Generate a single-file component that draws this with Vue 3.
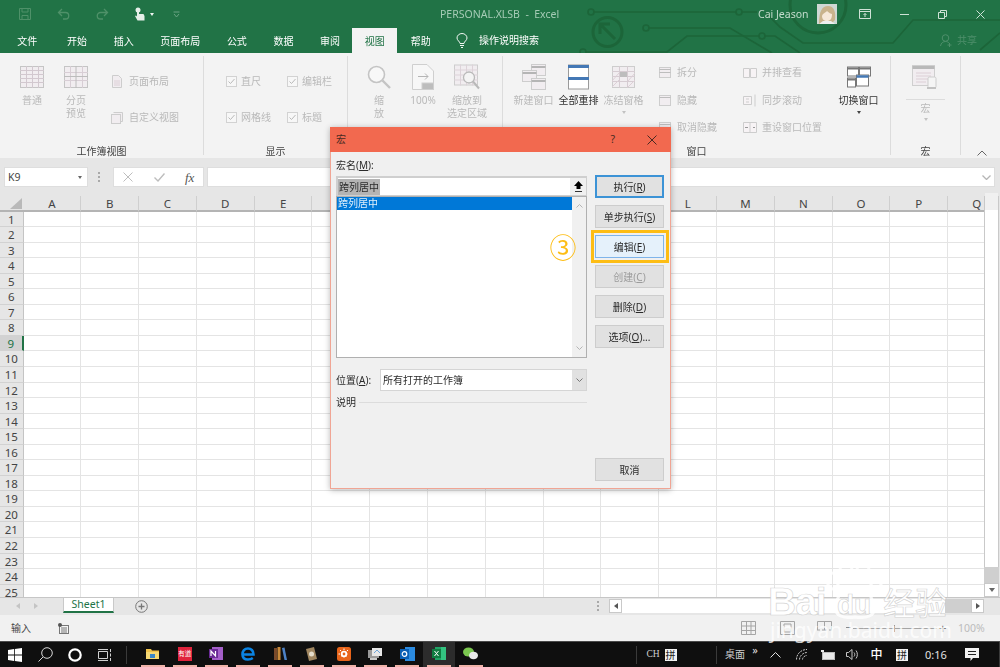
<template>
  <div class="app">
    <header class="head">
      <svg class="circuit" viewBox="0 0 1000 53" width="1000" height="53" fill="none" stroke="#1c6539" stroke-width="1.7">
        <circle cx="591" cy="12" r="3"/><path d="M594 12H736M742 12H757"/><circle cx="739" cy="12" r="3"/>
        <circle cx="607.5" cy="32" r="14.5" stroke-width="3"/><path d="M615 39L601 25M600 34V24H610" stroke-width="3"/>
        <circle cx="646" cy="28" r="3"/><path d="M649 28H730L772 53"/>
        <circle cx="583" cy="52" r="3"/><path d="M586 52H667L687 36H759M765 36H775L800 53"/><circle cx="762" cy="36" r="3"/>
        <path d="M766 13L780 27L803 43H893L913 20H1000M980 50L1000 33"/>
        <circle cx="818" cy="5" r="28" stroke-width="3"/>
      </svg>
      <div class="titlebar">
        <svg class="qa save" width="12" height="12" viewBox="0 0 12 12" fill="none" stroke="#4f9169"><path d="M.5.5H11.5V11.5H.5Z"/><path d="M3 .5V4H9V.5M3 11.5V7.5H9V11.5"/></svg>
        <svg class="qa undo" width="13" height="12" viewBox="0 0 13 12" fill="none" stroke="#4f9169" stroke-width="1.3"><path d="M5 1L1.5 4.5L5 8M2 4.5H8.5A3.2 3.2 0 0 1 8.5 11H6"/></svg>
        <svg class="qa redo" width="13" height="12" viewBox="0 0 13 12" fill="none" stroke="#4f9169" stroke-width="1.3"><path d="M8 1L11.5 4.5L8 8M11 4.5H4.5A3.2 3.2 0 0 0 4.500 11H7"/></svg>
        <svg class="qa touch" width="11" height="14" viewBox="0 0 11 14" fill="#e6efe9"><circle cx="4" cy="3" r="2.5"/><path d="M3 3H5V7H9.500L10.500 9V13.500H3.500L1 9L2 8.500L3 9.500Z"/></svg>
        <span class="caret-w"></span>
        <svg class="qa more" width="7" height="7" viewBox="0 0 7 7" fill="none" stroke="#6aa383"><path d="M.5 1H6.500M1 3L3.500 6L6 3"/></svg>
        <span class="doc-title">PERSONAL.XLSB&nbsp; - &nbsp;Excel</span>
        <span class="user">Cai Jeason</span>
        <svg class="avatar" width="20" height="20" viewBox="0 0 20 20"><rect width="20" height="20" fill="#cfd8d4"/><path d="M2 20C2 7 5 2 11 2C17 2 19 8 18 16L14 20Z" fill="#c9b38c"/><path d="M5 12C6 9 8 9 10 7C12 9 14 10 15 10C15 15 13 17 10 17C7 17 5 15 5 12Z" fill="#f6e8d9"/><path d="M2 20L6 17L14 17L18 20Z" fill="#eef0f0"/></svg>
        <svg class="wc wc1" width="12" height="10" viewBox="0 0 12 10" fill="none" stroke="#cfe2d6"><path d="M.5.500H11.500V9.500H.5ZM.5 2.500H11.500M6 8V4.500M4.500 6L6 4.500L7.500 6"/></svg>
        <svg class="wc wc2" width="9" height="9" viewBox="0 0 9 9" stroke="#cfe2d6"><path d="M0 4.500H9"/></svg>
        <svg class="wc wc3" width="9" height="9" viewBox="0 0 9 9" fill="none" stroke="#cfe2d6"><path d="M.5 2.500H6.500V8.500H.5ZM2.500 2.500V.5H8.500V6.500H6.500"/></svg>
        <svg class="wc wc4" width="9" height="9" viewBox="0 0 9 9" stroke="#cfe2d6"><path d="M.5.500L8.500 8.500M8.500.500L.5 8.500"/></svg>
      </div>
      <nav class="tabs">
        <span v-for="t in tabs" :key="t" class="tab" :class="{ active: t === '视图', first: t === '文件' }">{{ t }}</span>
        <svg class="bulb" width="12" height="15" viewBox="0 0 12 15" fill="none" stroke="#f2f7f4"><path d="M4 10.500C4 8.500 1 7.500 1 5A5 4.500 0 0 1 11 5C11 7.500 8 8.500 8 10.500ZM4 12.500H8M5 14.500H7"/></svg>
        <span class="search">操作说明搜索</span>
        <svg class="person" width="12" height="13" viewBox="0 0 12 13" fill="none" stroke="#4f8f6b"><circle cx="5.500" cy="4" r="3.300"/><path d="M.5 12C1 9 3 7.500 5.500 7.500C7 7.500 8 8 9 9M9.500 9V13M7.500 11H11.500"/></svg>
        <span class="share">共享</span>
      </nav>
    </header>

    <section class="ribbon">
      <div class="group g1">
        <div class="group-body">
          <div class="big">
            <svg class="big-ic" width="24" height="22" viewBox="0 0 24 22"><rect x=".5" y=".5" width="23" height="21" fill="#f1edf0" stroke="#c5c5c5"/><path d="M0 4.500H24M0 8.500H24M0 12.500H24M0 16.500H24M6.500 0V22M12.500 0V22M18.500 0V22" stroke="#d2c8cf"/></svg>
            <span class="lbl">普通</span>
          </div>
          <div class="big">
            <svg class="big-ic" width="24" height="22" viewBox="0 0 24 22"><rect x=".5" y=".5" width="23" height="21" fill="#f1edf0" stroke="#c5c5c5"/><path d="M0 6.500H24M0 14.500H24M6.500 0V22M18.500 0V22" stroke="#d8ced5"/><path d="M12 0V22M0 10.500H24" stroke="#bcbcbc"/></svg>
            <span class="lbl">分页<br>预览</span>
          </div>
          <div class="small-col c1">
            <div class="small">
              <svg class="sic" width="10" height="13" viewBox="0 0 10 13" fill="#f1edf0" stroke="#cdcdcd"><path d="M.5.500H6.500L9.500 3.500V12.500H.5Z"/><path d="M2 6H8M2 8H8M2 10H8" stroke="#dccfd6"/></svg>
              <span class="lbl">页面布局</span>
            </div>
            <div class="small">
              <svg class="sic" width="12" height="12" viewBox="0 0 12 12" fill="#f1edf0" stroke="#cdcdcd"><path d="M2.500.500H11.500V9.500H9.500"/><rect x=".5" y="2.500" width="9" height="9"/></svg>
              <span class="lbl">自定义视图</span>
            </div>
          </div>
        </div>
        <div class="group-label">工作簿视图</div>
      </div>

      <div class="group g2">
        <div class="group-body">
          <div class="small-col c2a">
            <div class="small chk"><svg width="11" height="11" viewBox="0 0 11 11" fill="#f7f7f7" stroke="#d2d2d2"><rect x=".5" y=".5" width="10" height="10"/><path d="M2.500 5.500L4.500 7.500L8.500 3" fill="none" stroke="#b9b9b9"/></svg><span class="lbl">直尺</span></div>
            <div class="small chk"><svg width="11" height="11" viewBox="0 0 11 11" fill="#f7f7f7" stroke="#d2d2d2"><rect x=".5" y=".5" width="10" height="10"/><path d="M2.500 5.500L4.500 7.500L8.500 3" fill="none" stroke="#b9b9b9"/></svg><span class="lbl">网格线</span></div>
          </div>
          <div class="small-col">
            <div class="small chk"><svg width="11" height="11" viewBox="0 0 11 11" fill="#f7f7f7" stroke="#d2d2d2"><rect x=".5" y=".5" width="10" height="10"/><path d="M2.500 5.500L4.500 7.500L8.500 3" fill="none" stroke="#b9b9b9"/></svg><span class="lbl">编辑栏</span></div>
            <div class="small chk"><svg width="11" height="11" viewBox="0 0 11 11" fill="#f7f7f7" stroke="#d2d2d2"><rect x=".5" y=".5" width="10" height="10"/><path d="M2.500 5.500L4.500 7.500L8.500 3" fill="none" stroke="#b9b9b9"/></svg><span class="lbl">标题</span></div>
          </div>
        </div>
        <div class="group-label">显示</div>
      </div>

      <div class="group g3">
        <div class="group-body">
          <div class="big">
            <svg class="big-ic" width="24" height="24" viewBox="0 0 24 24" fill="none" stroke="#c4c4c4"><circle cx="9.500" cy="9.500" r="8" stroke-width="1.600" fill="#f8f8f8"/><path d="M15.500 15.500L23 23" stroke-width="2.400"/></svg>
            <span class="lbl">缩<br>放</span>
          </div>
          <div class="big">
            <svg class="big-ic" width="22" height="26" viewBox="0 0 22 26" fill="#f7f7f7" stroke="#cfcfcf"><path d="M.5.500H15L21.500 7V25.500H.5Z"/><path d="M6 12.500H16M13 9.500L16 12.500L13 15.500" fill="none" stroke="#b5b5b5"/><rect x="10" y="19" width="11.500" height="6.500" fill="#bdbdbd"/></svg>
            <span class="lbl">100%</span>
          </div>
          <div class="big">
            <svg class="big-ic" width="26" height="25" viewBox="0 0 26 25"><rect x=".5" y=".5" width="23" height="20" fill="#f1edf0" stroke="#cdcdcd"/><path d="M0 5.500H24M0 10.500H24M0 15.500H24M6.500 0V21M12.500 0V21M18.500 0V21" stroke="#ddd3d9"/><circle cx="15" cy="13" r="5.500" fill="#f4f4f4" stroke="#b9b9b9" stroke-width="1.300"/><path d="M19 17L25 24" stroke="#b9b9b9" stroke-width="2"/></svg>
            <span class="lbl">缩放到<br>选定区域</span>
          </div>
        </div>
        <div class="group-label">缩放</div>
      </div>

      <div class="group g4">
        <div class="group-body">
          <div class="big wide">
            <svg class="big-ic" width="24" height="26" viewBox="0 0 24 26" fill="#f1edf0" stroke="#cdcdcd"><rect x="9.500" y=".5" width="14" height="11"/><path d="M9.500 3H23.500" stroke="#b5b5b5" stroke-width="2"/><rect x=".5" y="6.500" width="14" height="11"/><path d="M.5 9H14.500" stroke="#b5b5b5" stroke-width="2"/><rect x="9.500" y="14.500" width="14" height="11"/><path d="M9.500 17H23.500" stroke="#b5b5b5" stroke-width="2"/></svg>
            <span class="lbl">新建窗口</span>
          </div>
          <div class="big wide on">
            <svg class="big-ic" width="21" height="25" viewBox="0 0 21 25" fill="#fff" stroke="#9a9a9a"><rect x=".5" y=".5" width="20" height="24"/><path d="M0 2H21M0 14H21" stroke="#4478b5" stroke-width="3"/></svg>
            <span class="lbl">全部重排</span>
          </div>
          <div class="big wide">
            <svg class="big-ic" width="23" height="22" viewBox="0 0 23 22"><rect x=".5" y=".5" width="22" height="21" fill="#f1edf0" stroke="#cdcdcd"/><path d="M0 5.500H23M0 10.500H23M0 15.500H23M7.500 0V22M15.500 0V22" stroke="#d6ccd2"/><rect x="8" y="6" width="7" height="5" fill="#bdbdbd"/><path d="M0 15L7 7M0 21L7 14M16 15L23 7M16 21L23 14" stroke="#dccfd6"/></svg>
            <span class="lbl">冻结窗格</span>
            <i class="mini-caret dis"></i>
          </div>
          <div class="small-col three c4a">
            <div class="small w"><svg class="sic2" width="12" height="11" viewBox="0 0 12 11" fill="#f1edf0" stroke="#cdcdcd"><rect x=".5" y=".5" width="11" height="10"/><path d="M.5 2.500H11.500M.5 5.500H11.500" stroke="#bdbdbd"/></svg><span class="lbl">拆分</span></div>
            <div class="small w"><svg class="sic2" width="12" height="11" viewBox="0 0 12 11" fill="#f1edf0" stroke="#cdcdcd"><rect x=".5" y=".5" width="11" height="10"/><path d="M.5 2.500H11.500" stroke="#bdbdbd"/></svg><span class="lbl">隐藏</span></div>
            <div class="small w"><svg class="sic2" width="12" height="11" viewBox="0 0 12 11" fill="#f1edf0" stroke="#cdcdcd"><rect x=".5" y=".5" width="11" height="10"/><path d="M.5 2.500H11.500" stroke="#bdbdbd"/></svg><span class="lbl">取消隐藏</span></div>
          </div>
          <div class="small-col three c4b">
            <div class="small w2"><svg class="sic3" width="14" height="11" viewBox="0 0 14 11" fill="#f7f3f5" stroke="#cdcdcd"><path d="M.5 1.500H6.500V10.500H.5ZM7.500 1.500H13.500V10.500H7.500Z"/></svg><span class="lbl">并排查看</span></div>
            <div class="small w2"><svg class="sic3" width="14" height="13" viewBox="0 0 14 13" fill="#f7f3f5" stroke="#cdcdcd"><path d="M.5 2.500H8.500V10.500H.5ZM3 5H6M3 8H6M12 .5V12.500"/></svg><span class="lbl">同步滚动</span></div>
            <div class="small w2"><svg class="sic3" width="14" height="11" viewBox="0 0 14 11" fill="#f7f3f5" stroke="#cdcdcd"><path d="M.5 .5H13.500V10.500H.5ZM7 .5V10.500"/><path d="M2 5.500H5M10 5.500H12" stroke="#999"/></svg><span class="lbl">重设窗口位置</span></div>
          </div>
          <div class="big wide on">
            <svg class="big-ic" width="24" height="21" viewBox="0 0 24 21" fill="#fff" stroke="#777"><rect x=".5" y=".5" width="11" height="9"/><path d="M.5 2H11.500" stroke-width="2"/><rect x="12.500" y=".5" width="11" height="9"/><path d="M12.500 2H23.500" stroke-width="2"/><rect x=".5" y="11.500" width="8" height="9"/><path d="M.5 13H8.500" stroke-width="2"/><rect x="9.500" y="8.500" width="12" height="11"/><path d="M9.500 10H21.500" stroke="#4478b5" stroke-width="2.500"/></svg>
            <span class="lbl">切换窗口</span>
            <i class="mini-caret"></i>
          </div>
        </div>
        <div class="group-label">窗口</div>
      </div>

      <div class="group g5">
        <div class="group-body macro">
          <svg width="27" height="25" viewBox="0 0 27 25"><rect x=".5" y=".5" width="22" height="20" fill="#f1edf0" stroke="#cfcfcf"/><path d="M.5 2.500H22.500" stroke="#b9b9b9" stroke-width="3"/><path d="M4 8H19M4 11H19M4 14H19M4 17H14" stroke="#dccfd6"/><rect x="16" y="12" width="8" height="11" rx="1.500" fill="#f5f5f5" stroke="#cdcdcd"/><path d="M15 23H24" stroke="#c2c2c2" stroke-width="2"/></svg>
          <span class="macro-line"></span>
          <span class="lbl">宏</span>
          <i class="mini-caret dis"></i>
        </div>
        <div class="group-label">宏</div>
      </div>
      <svg class="collapse" width="10" height="6" viewBox="0 0 10 6" fill="none" stroke="#666"><path d="M.5 5.500L5 1L9.500 5.500"/></svg>
    </section>

    <section class="formula">
      <div class="namebox"><span>K9</span><i class="mini-caret dark"></i></div>
      <svg class="grip" width="3" height="10" viewBox="0 0 3 10" fill="#a9a9a9"><path d="M0 0H2V2H0ZM0 4H2V6H0ZM0 8H2V10H0Z"/></svg>
      <div class="fx-box">
        <svg width="10" height="10" viewBox="0 0 10 10" stroke="#bdbdbd"><path d="M.5.500L9.500 9.500M9.500.500L.5 9.500"/></svg>
        <svg width="11" height="9" viewBox="0 0 11 9" fill="none" stroke="#bdbdbd" stroke-width="1.400"><path d="M.5 4.500L4 8L10.500 .5"/></svg>
        <span class="fx">fx</span>
      </div>
      <div class="fx-input"><svg width="9" height="5" viewBox="0 0 9 5" fill="none" stroke="#b5b5b5" stroke-width="1.300"><path d="M.5.500L4.500 4.500L8.500.5"/></svg></div>
    </section>

    <section class="sheet">
      <div class="cells">
        <div class="corner"><i></i></div>
        <div v-for="c in cols" :key="c" class="col-h">{{ c }}</div>
        <template v-for="r in rows" :key="r">
          <div class="row-h" :class="{ active: r === 9 }">{{ r }}</div>
          <div v-for="c in cols" :key="c + r" class="cell"></div>
        </template>
      </div>
      <div class="vscroll">
        <div class="sb-btn"><i class="tri up"></i></div>
        <div class="vthumb"></div>
        <div class="sb-btn bottom"><i class="tri down"></i></div>
      </div>
    </section>

    <section class="sheetbar">
      <i class="tri left faint first-arrow"></i>
      <i class="tri right faint second-arrow"></i>
      <div class="sheet-tab">Sheet1</div>
      <svg class="add" width="13" height="13" viewBox="0 0 13 13" fill="none" stroke="#777"><circle cx="6.500" cy="6.500" r="5.800"/><path d="M6.500 3.500V9.500M3.500 6.500H9.500" stroke-width="1.300"/></svg>
      <svg class="grip-tabs" width="3" height="10" viewBox="0 0 3 10" fill="#a9a9a9"><path d="M0 0H2V2H0ZM0 4H2V6H0ZM0 8H2V10H0Z"/></svg>
      <div class="hscroll">
        <div class="hbtn"><i class="tri left"></i></div>
        <div class="hthumb"></div>
        <div class="hbtn"><i class="tri right"></i></div>
      </div>
    </section>

    <footer class="status">
      <span class="st-text">输入</span>
      <svg class="st-macro" width="11" height="11" viewBox="0 0 11 11" fill="none" stroke="#777"><rect x="1.500" y="2.500" width="9" height="8" fill="#f5f5f5"/><path d="M3 5H9M3 7H9M3 9H9"/><circle cx="2" cy="2" r="2" fill="#555" stroke="none"/></svg>
      <svg class="st-view v1" width="15" height="14" viewBox="0 0 15 14" fill="none" stroke="#a5a5a5"><path d="M.5.500H14.500V13.500H.5ZM5.500 0V14M10 0V14M0 5H15M0 9.500H15"/></svg>
      <svg class="st-view v2" width="15" height="14" viewBox="0 0 15 14" fill="none" stroke="#a5a5a5"><path d="M.5.500V13.500H14.500V.5ZM4 3H11V11H4Z"/></svg>
      <svg class="st-view v3" width="15" height="14" viewBox="0 0 15 14" fill="none" stroke="#a5a5a5"><path d="M.5 9V.5H14.500V9M7.500 0V9M0 9H3M5 9H10M12 9H15"/></svg>
      <span class="zoom-minus"></span>
      <div class="slider"><i></i></div>
      <span class="zoom-plus">+</span>
      <span class="zoom-val">100%</span>
    </footer>

    <footer class="taskbar">
      <div class="tb-slot"><svg width="14" height="14" viewBox="0 0 14 14" fill="#fff"><path d="M0 2L6 1.100V6.600H0ZM6.800 1L14 0V6.600H6.800ZM0 7.400H6V12.900L0 12ZM6.800 7.400H14V14L6.800 13Z"/></svg></div>
      <div class="tb-slot"><svg width="15" height="15" viewBox="0 0 15 15" fill="none" stroke="#d8d8d8"><circle cx="9" cy="6" r="5.300"/><path d="M5 10L.5 14.500"/></svg></div>
      <div class="tb-slot"><svg width="14" height="14" viewBox="0 0 14 14" fill="none" stroke="#fff" stroke-width="2.200"><circle cx="7" cy="7" r="5.700"/></svg></div>
      <div class="tb-slot"><svg width="14" height="12" viewBox="0 0 14 12" fill="none" stroke="#d0d0d0"><path d="M.5 2.500H9.500V9.500H.5ZM0 .5H10M0 11.500H10M12.500 0V3M12.500 4.500V7.500M12.500 9V12"/></svg></div>
      <i class="tb-sep first"></i>
      <div class="tb-app"><svg width="13" height="12" viewBox="0 0 13 12"><path d="M0 1H5L6 2.500H13V11H0Z" fill="#f0c24c"/><path d="M0 4H13V11H0Z" fill="#f6d873"/><rect x="4" y="6" width="5" height="4" fill="#3a86c8"/></svg></div>
      <div class="tb-app"><span class="app-red">有道</span></div>
      <div class="tb-app"><svg width="14" height="13" viewBox="0 0 14 13"><rect x="3" y="0" width="11" height="13" fill="#a45fc9"/><rect x="0" y="2" width="9" height="9" fill="#6a2a95"/><path d="M2 9V4L6.500 9V4" fill="none" stroke="#fff" stroke-width="1.200"/></svg></div>
      <div class="tb-app"><svg width="14" height="14" viewBox="0 0 14 14" fill="none" stroke="#0b84e3" stroke-width="2.600"><path d="M1.500 7.500H12.500C12.500 3.500 10 1.500 7 1.500C3.500 1.500 1.500 4 1.500 7.500C1.500 11 4 12.500 7 12.500C9 12.500 10.500 12 11.800 11"/></svg></div>
      <div class="tb-app"><svg width="13" height="13" viewBox="0 0 13 13"><rect x="0" y="1" width="3" height="12" fill="#7a4a2a"/><rect x="3.500" y="0" width="3" height="13" fill="#c98a3b"/><path d="M8 1L10.500 .5L13 13H10.500Z" fill="#4d82c7"/></svg></div>
      <div class="tb-app"><svg width="11" height="14" viewBox="0 0 11 14"><path d="M0 2L8 0L11 12L3 14Z" fill="#a08660"/><circle cx="5.500" cy="7" r="2.500" fill="#e5ddcc"/></svg></div>
      <div class="tb-app"><svg width="14" height="14" viewBox="0 0 14 14"><rect width="14" height="14" rx="2.500" fill="#e8641a"/><circle cx="7" cy="7" r="3.200" fill="#fff"/><circle cx="7" cy="7" r="1.400" fill="#e8641a"/><path d="M7 1.500V12.500M1.500 7H12.500M3 3L11 11M11 3L3 11" stroke="#fff" stroke-dasharray="1.500 6"/></svg></div>
      <div class="tb-app"><svg width="14" height="12" viewBox="0 0 14 12"><rect x="0" y="2" width="11" height="8" fill="#9a9a9a"/><rect x="4" y="0" width="10" height="8" fill="#e7e7e7"/><path d="M6 5L9 2L12 5" stroke="#6ea4d8" fill="none"/><rect x="2" y="10" width="7" height="2" fill="#c9c9c9"/></svg></div>
      <div class="tb-app"><svg width="15" height="14" viewBox="0 0 15 14"><rect x="5" y="0" width="10" height="14" fill="#2b8be0"/><rect x="0" y="2" width="9" height="10" fill="#0a5fb4"/><circle cx="4.500" cy="7" r="2.300" fill="none" stroke="#fff" stroke-width="1.200"/></svg></div>
      <div class="tb-app excel"><svg width="14" height="13" viewBox="0 0 14 13"><rect x="3" y="0" width="11" height="13" fill="#21a366"/><path d="M9 0H14V13H9Z" fill="#33c481"/><rect x="0" y="2" width="9" height="9" fill="#107c41"/><path d="M2.500 4L6.500 9M6.500 4L2.500 9" stroke="#fff"/></svg></div>
      <div class="tb-app"><svg width="15" height="13" viewBox="0 0 15 13"><ellipse cx="5.500" cy="5" rx="5.500" ry="4.500" fill="#7bc74f"/><ellipse cx="10.500" cy="8.500" rx="4.500" ry="3.800" fill="#e9e9e9"/></svg></div>
      <div class="tray">
        <i class="tb-sep"></i>
        <span class="ch">CH</span>
        <span class="pin">拼</span>
        <span></span>
        <i class="tb-sep"></i>
        <span class="desk">桌面</span>
        <span class="chev">»</span>
        <svg width="11" height="6" viewBox="0 0 11 6" fill="none" stroke="#e0e0e0"><path d="M.5 5.500L5.500 .5L10.500 5.500"/></svg>
        <svg width="12" height="11" viewBox="0 0 12 11" fill="none" stroke="#c8c8c8"><path d="M.5 10.500C.5 5 5 .5 11 .5M3.500 10.500C3.500 7 7 3.500 11 3.500M6.500 10.500C6.500 8.500 8.500 6.500 11 6.500" stroke-dasharray="2 1"/></svg>
        <svg width="14" height="10" viewBox="0 0 14 10"><rect x="1.500" y="2.500" width="12" height="7" fill="#e8e8e8" stroke="#bbb"/><path d="M0 0H3V2H0Z" fill="#e8e8e8"/></svg>
        <svg width="12" height="11" viewBox="0 0 12 11" fill="none" stroke="#c8c8c8"><path d="M.5 3.500H2.500L6 .5V10.500L2.500 7.500H.5ZM8 3.500C9 4.500 9 6.500 8 7.500M10 1.500C11.800 3.500 11.800 7.500 10 9.500"/></svg>
        <span class="zh">中</span>
        <span class="pin">拼</span>
        <span class="clock">0:16</span>
        <svg width="14" height="14" viewBox="0 0 14 14"><path d="M0 0H14V10H8L5.500 13V10H0Z" fill="#f2f2f2"/><path d="M3 3.500H11M3 6.500H11" stroke="#222"/></svg>
        <i class="tb-sep last"></i>
      </div>
    </footer>

    <div class="dialog">
      <div class="dlg-title">
        <span class="dlg-name">宏</span>
        <span class="dlg-help">?</span>
        <svg width="10" height="10" viewBox="0 0 10 10" stroke="#4a2a22"><path d="M.5.500L9.500 9.500M9.500.500L.5 9.500"/></svg>
      </div>
      <div class="dlg-body">
        <div class="dlg-left">
          <div class="field-label">宏名(<u>M</u>):</div>
          <div class="dlg-input"><span class="sel">跨列居中</span><span class="up"><svg width="9" height="12" viewBox="0 0 9 12"><path d="M4.500 0L9 5H6.500V8H2.500V5H0Z" fill="#000"/><path d="M1 10.500H8" stroke="#333"/></svg></span></div>
          <div class="dlg-list">
            <div class="list-main"><div class="list-sel">跨列居中</div></div>
            <div class="list-sb">
              <svg width="7" height="4" viewBox="0 0 7 4" fill="none" stroke="#b5b5b5"><path d="M.5 3.500L3.500 .5L6.500 3.500"/></svg>
              <svg width="7" height="4" viewBox="0 0 7 4" fill="none" stroke="#b5b5b5"><path d="M.5 .5L3.500 3.500L6.500 .5"/></svg>
            </div>
          </div>
          <div class="loc">
            <span class="loc-label">位置(<u>A</u>):</span>
            <div class="loc-select"><span>所有打开的工作簿</span><span class="loc-btn"><svg width="7" height="4" viewBox="0 0 7 4" fill="none" stroke="#777"><path d="M.5 .5L3.500 3.500L6.500 .5"/></svg></span></div>
          </div>
          <div class="legend"><span>说明</span><i></i></div>
        </div>
        <div class="dlg-right">
          <button class="btn default">执行(<u>R</u>)</button>
          <button class="btn">单步执行(<u>S</u>)</button>
          <button class="btn hover">编辑(<u>E</u>)</button>
          <button class="btn off">创建(<u>C</u>)</button>
          <button class="btn">删除(<u>D</u>)</button>
          <button class="btn">选项(<u>O</u>)...</button>
          <button class="btn cancel">取消</button>
        </div>
      </div>
      <div class="frame"></div>
      <span class="step">③</span>
    </div>

    <div class="watermark">
      <svg class="paw" width="58" height="62" viewBox="0 0 58 62" fill="none" stroke="#fff" stroke-width="3" opacity=".85"><ellipse cx="7" cy="23" rx="5.500" ry="8"/><ellipse cx="20" cy="9" rx="6" ry="8"/><ellipse cx="37" cy="9" rx="6" ry="8"/><ellipse cx="50" cy="23" rx="5.500" ry="8"/><path d="M10 48C11 36 19 29 28 29C38 29 46 36 48 48C50 58 40 61 29 59C18 61 8 58 10 48Z"/></svg>
      <span class="wm-bai">Bai</span>
      <span class="wm-du">du</span>
      <span class="wm-cn">经验</span>
      <span class="wm-url">jingyan.baidu.com</span>
    </div>
  </div>
</template>

<script setup>
const tabs = ['文件', '开始', '插入', '页面布局', '公式', '数据', '审阅', '视图', '帮助']
const cols = 'ABCDEFGHIJKLMNOPQ'.split('')
const rows = Array.from({ length: 25 }, (_, i) => i + 1)
</script>

<style>
html, body { margin: 0; background: #f1f1f1; }
</style>

<style scoped>
.app {
  position: relative;
  width: 1000px;
  height: 667px;
  overflow: hidden;
  display: flex;
  flex-direction: column;
  font-family: "Noto Sans", "Noto Sans CJK SC", sans-serif;
  font-size: 10px;
  line-height: 13px;
  color: #444;
  filter: blur(0.3px);
}
i { display: block; font-style: normal; }

.head { position: relative; height: 53px; background: #217346; flex: none; }
.circuit { position: absolute; left: 0; top: 0; }
.titlebar { position: relative; height: 28px; display: flex; align-items: center; }
.qa { flex: none; }
.save { margin-left: 19px; }
.undo { margin-left: 26px; }
.redo { margin-left: 26px; }
.touch { margin-left: 25px; }
.caret-w { width: 0; height: 0; margin-left: 5px; border: 2.5px solid transparent; border-top: 3px solid #f0f5f2; border-bottom: 0; }
.more { margin-left: 19px; }
.doc-title { margin-left: 260px; width: 130px; white-space: nowrap; font-size: 10.500px; color: #a5cbb5; }
.user { margin-left: 188px; width: 59px; white-space: nowrap; font-size: 10.500px; color: #c4dccd; }
.avatar { flex: none; }
.wc { flex: none; }
.wc1 { margin-left: 22px; }
.wc2 { margin-left: 29px; }
.wc3 { margin-left: 29px; }
.wc4 { margin-left: 29px; }

.tabs { position: relative; height: 25px; display: flex; align-items: center; padding-left: 4px; color: #fff; }
.tab { height: 25px; line-height: 26px; padding: 0 13.300px; flex: none; }
.tab.first { padding-right: 16.500px; }
.tab.active { background: #f3f3f3; color: #217346; width: 20px; padding: 0 12.500px; margin-left: -1px; }
.bulb { margin-left: 12px; flex: none; }
.search { margin-left: 11px; }
.person { margin-left: 401px; flex: none; }
.share { margin-left: 5px; color: #4f8f6b; }

.ribbon { position: relative; height: 105px; flex: none; display: flex; background: #f3f3f3; }
.group { display: flex; flex-direction: column; margin-top: 3px; height: 99px; border-right: 1px solid #dcdcdc; box-sizing: border-box; flex: none; }
.group-body { flex: 1; display: flex; padding-top: 8px; min-height: 0; }
.group-label { text-align: center; color: #444; margin-bottom: -3px; height: 13px; }
.g1 { width: 204px; }
.g1 .group-body { padding-left: 10px; }
.g2 { width: 144px; }
.g2 .group-body { padding-left: 22px; }
.g3 { width: 155px; }
.g3 .group-body { padding-left: 9px; }
.g4 { width: 388px; }
.g4 .group-body { padding-left: 8px; }
.g5 { width: 70px; }
.lbl { color: #b9b9b9; white-space: nowrap; }
.big { width: 44px; display: flex; flex-direction: column; align-items: center; text-align: center; flex: none; }
.big.wide { width: 45px; }
.big.on .lbl { color: #333; }
.big-ic { height: 26px; margin-bottom: 4px; flex: none; }
.small-col { display: flex; flex-direction: column; gap: 23px; padding-top: 11px; }
.small-col.three { gap: 14.500px; padding-top: 2px; }
.c1 { margin-left: 13px; }
.small { display: flex; align-items: center; height: 13px; }
.sic { width: 12px; margin-right: 6px; flex: none; }
.chk svg { margin-right: 4px; flex: none; }
.c2a { width: 61px; }
.c4a { margin-left: 13px; width: 84px; }
.c4b { width: 93px; }
.sic2 { margin-right: 6px; flex: none; }
.sic3 { margin-right: 5px; flex: none; }
.mini-caret { width: 0; height: 0; margin-top: 4px; border: 2.500px solid transparent; border-top: 3px solid #444; border-bottom: 0; }
.mini-caret.dis { border-top-color: #c2c2c2; }
.mini-caret.dark { margin: 0; border-top-color: #666; }
.macro { flex-direction: column; align-items: center; padding-top: 9px; }
.macro-line { width: 39px; height: 1px; background: #dcdcdc; margin-top: 9px; margin-bottom: 2px; }
.macro .mini-caret { margin-top: 3px; }
.collapse { margin: auto 0 2px 16px; flex: none; }

.formula { height: 38px; flex: none; background: #e6e6e6; display: flex; align-items: flex-start; padding-top: 9px; box-sizing: border-box; }
.namebox { margin-left: 4px; width: 84px; height: 20px; background: #fff; border: 1px solid #dedede; box-sizing: border-box; display: flex; align-items: center; justify-content: space-between; padding: 0 5px 0 3px; font-size: 10.500px; color: #444; flex: none; }
.grip { margin: 5px 12px 0 10px; flex: none; }
.fx-box { width: 91px; height: 20px; background: #fff; border: 1px solid #dedede; box-sizing: border-box; display: flex; align-items: center; padding-left: 9px; gap: 21px; flex: none; }
.fx { font-family: "Liberation Serif", serif; font-style: italic; font-size: 13px; color: #555; margin-left: -1px; }
.fx-input { margin-left: 3px; width: 788px; height: 20px; background: #fff; border: 1px solid #dedede; box-sizing: border-box; display: flex; align-items: center; justify-content: flex-end; padding-right: 3px; flex: none; }

.sheet { height: 401px; flex: none; display: flex; background: #e6e6e6; }
.cells { width: 984px; height: 401px; overflow: hidden; display: grid; grid-template-columns: 23.500px repeat(17, 57.800px); grid-template-rows: 15.500px; grid-auto-rows: 15.550px; background: #fff; }
.corner { background: #e6e6e6; border-bottom: 2px solid #b4b4b4; box-sizing: border-box; position: relative; }
.corner i { position: absolute; right: 2px; bottom: 1px; width: 0; height: 0; border-left: 12px solid transparent; border-bottom: 11px solid #b9b9b9; }
.col-h { background: #e6e6e6; border-right: 1px solid #cfcfcf; border-bottom: 2px solid #b4b4b4; box-sizing: border-box; text-align: center; font-size: 11.500px; line-height: 15px; color: #444; }
.row-h { background: #e6e6e6; border-bottom: 1px solid #d2d2d2; border-right: 1px solid #c4c4c4; box-sizing: border-box; text-align: center; font-size: 11.500px; line-height: 16px; color: #444; }
.row-h.active { background: #d2d2d2; color: #217346; border-right: 2px solid #217346; }
.cell { border-right: 1px solid #e4e4e4; border-bottom: 1px solid #e4e4e4; box-sizing: border-box; }
.vscroll { width: 15px; display: flex; flex-direction: column; height: 401px; background: #cfcfcf; flex: none; }
.sb-btn { height: 14px; background: #fff; border: 1px solid #c9c9c9; box-sizing: border-box; display: flex; align-items: center; justify-content: center; flex: none; }
.sb-btn.bottom { margin-top: auto; }
.vthumb { height: 357px; background: #fff; border-left: 1px solid #c9c9c9; border-right: 1px solid #c9c9c9; box-sizing: border-box; flex: none; }
.tri { width: 0; height: 0; border: 3px solid transparent; }
.tri.up { border-top: 0; border-bottom: 4px solid #666; }
.tri.down { border-bottom: 0; border-top: 4px solid #666; }
.tri.left { border-left: 0; border-right: 4px solid #555; }
.tri.right { border-right: 0; border-left: 4px solid #555; }
.tri.left.faint { border-right-color: #c4c4c4; }
.tri.right.faint { border-left-color: #c4c4c4; }

.sheetbar { height: 18px; flex: none; background: #e6e6e6; border-top: 1px solid #c6c6c6; box-sizing: border-box; display: flex; align-items: flex-start; }
.first-arrow { margin: 5px 0 0 16px; flex: none; }
.second-arrow { margin: 5px 0 0 14px; flex: none; }
.sheet-tab { margin-left: 25px; width: 51px; height: 15px; background: #fff; border-bottom: 2px solid #217346; border-left: 1px solid #c9c9c9; border-right: 1px solid #c9c9c9; box-sizing: border-box; text-align: center; color: #217346; font-size: 10.500px; line-height: 13px; flex: none; }
.add { margin: 2px 0 0 21px; flex: none; }
.grip-tabs { margin: 3px 0 0 449px; flex: none; }
.hscroll { margin: 1px 0 0 9px; width: 375px; height: 14px; display: flex; background: #cfcfcf; flex: none; }
.hbtn { width: 13px; background: #fff; border: 1px solid #c9c9c9; box-sizing: border-box; display: flex; align-items: center; justify-content: center; flex: none; }
.hbtn:last-child { margin-left: auto; }
.hthumb { width: 323px; background: #fff; flex: none; }

.status { height: 26px; flex: none; background: #f1f1f1; display: flex; align-items: center; }
.st-text { margin-left: 11px; width: 20px; color: #444; }
.st-macro { margin-left: 27px; flex: none; }
.st-view { flex: none; }
.st-view.v1 { margin-left: 672px; }
.st-view.v2 { margin-left: 24px; }
.st-view.v3 { margin-left: 22px; }
.zoom-minus { width: 5px; height: 2px; margin-left: 14px; border-top: 1px solid #888; margin-right: 2px; }
.slider { width: 84px; height: 1px; background: #a5a5a5; position: relative; }
.slider i { position: absolute; left: 41px; top: -3px; width: 1px; height: 7px; background: #999; }
.zoom-plus { margin-left: 2px; font-size: 13px; color: #777; width: 10px; }
.zoom-val { margin-left: 9px; color: #bcbcbc; font-size: 10.500px; }

.taskbar { position: relative; height: 26px; flex: none; background: #0f0f0f; border-top: 1px solid #4a4a4a; box-sizing: border-box; display: flex; align-items: center; }
.tb-slot { width: 30px; display: flex; justify-content: center; flex: none; }
.tb-sep { width: 1px; height: 18px; background: #3a3a3a; }
.tb-sep.first { margin: 0 10px 0 6px; }
.tb-sep.last { justify-self: end; height: 25px; }
.tb-app { position: relative; width: 31.800px; height: 25px; display: flex; align-items: center; justify-content: center; flex: none; padding-bottom: 2px; box-sizing: border-box; }
.tb-app::after { content: ""; position: absolute; left: 4px; right: 4px; bottom: 0; height: 2px; background: #efb2a8; }
.tb-app.excel { background: #2c2c2c; }
.app-red { display: block; width: 14px; height: 14px; background: #e0233c; color: #fff; font-size: 6.500px; line-height: 14px; text-align: center; }
.tray { position: absolute; left: 630px; bottom: 0; width: 370px; height: 25px; display: grid; grid-template-columns: 12px 22px 13px 33px 12px 26px 14px 27px 26px 25px 23px 27px 24px 44px 28px 14px; align-items: center; justify-items: center; color: #d8d8d8; }
.ch { font-family: "Liberation Serif", serif; font-size: 9.500px; color: #cfcfcf; }
.pin { width: 12px; height: 12px; background: #f2f2f2; color: #222; font-size: 10px; line-height: 12px; text-align: center; display: block; }
.desk { color: #cfcfcf; font-size: 10px; }
.chev { font-size: 11px; line-height: 10px; margin-top: -9px; color: #ddd; }
.zh { color: #fff; font-size: 12px; font-weight: 500; }
.clock { color: #e2e2e2; font-size: 11px; }

.dialog { position: absolute; left: 330px; top: 127px; width: 341px; height: 362px; box-sizing: border-box; border: 1px solid #f0a594; background: #f0f0f0; box-shadow: 0 1px 6px rgba(0, 0, 0, .28); color: #2b2b2b; }
.dlg-title { height: 25px; margin: -1px -1px 0; background: #f2694f; display: flex; align-items: center; padding: 0 14px 0 6px; color: #4a2a22; }
.dlg-name { flex: 1; font-size: 10px; }
.dlg-help { margin-right: 32px; font-size: 10.500px; }
.dlg-body { display: flex; padding: 7px 0 0 5px; }
.dlg-left { width: 251px; flex: none; }
.field-label { height: 13px; margin-bottom: 4px; }
.dlg-input { height: 20px; background: #fff; border: 1px solid #cfcfcf; border-width: 2px 1px 1px 2px; box-sizing: border-box; display: flex; align-items: center; justify-content: space-between; }
.sel { background: #b4b4b4; padding: 0 1px; line-height: 16px; }
.up { width: 16px; height: 17px; background: #f0f0f0; display: flex; align-items: center; justify-content: center; }
.dlg-list { height: 162px; background: #fff; border: 1px solid #b0b0b0; box-sizing: border-box; display: flex; }
.list-main { flex: 1; }
.list-sel { height: 13px; background: #0078d7; color: #dfeffb; padding-left: 1px; line-height: 13px; }
.list-sb { width: 14px; background: #f0f0f0; display: flex; flex-direction: column; justify-content: space-between; align-items: center; padding: 7px 0; box-sizing: border-box; }
.loc { display: flex; align-items: center; margin-top: 11px; }
.loc-label { width: 44px; flex: none; white-space: nowrap; }
.loc-select { width: 207px; height: 22px; background: #fff; border: 1px solid #d5d5d5; box-sizing: border-box; display: flex; align-items: center; justify-content: space-between; padding-left: 2px; }
.loc-btn { width: 14px; height: 20px; background: #e1e1e1; display: flex; align-items: center; justify-content: center; }
.legend { display: flex; align-items: center; margin-top: 5px; gap: 3px; }
.legend i { flex: 1; height: 1px; background: #dcdcdc; }
.dlg-right { margin: 16px 0 0 8px; width: 69px; display: flex; flex-direction: column; gap: 7px; }
.btn { width: 69px; height: 23px; padding: 1px 0 0; background: #e1e1e1; border: 1px solid #cdcdcd; box-sizing: border-box; font: inherit; color: #2b2b2b; }
.btn.default { border: 2px solid #3c93d6; }
.btn.hover { background: #e5f1fb; border: 1px solid #7eb4ea; }
.btn.off { color: #9c9c9c; }
.btn.cancel { margin-top: 103px; }
.frame { position: absolute; left: 260px; top: 102px; width: 78px; height: 33px; border: 3px solid #fdbd14; box-sizing: border-box; }
.step { position: absolute; left: 218px; top: 105px; width: 28px; text-align: center; font-family: "Noto Sans CJK SC", sans-serif; font-size: 27px; line-height: 28px; color: #fdbd14; }

.watermark { position: absolute; left: 768px; top: 555px; width: 190px; height: 100px; pointer-events: none; color: #fff; }
.paw { position: absolute; left: 58px; top: 3px; }
.wm-bai, .wm-du, .wm-cn { position: absolute; -webkit-text-stroke: .7px rgba(170, 170, 170, .5); font-family: "Liberation Sans", sans-serif; }
.wm-bai { left: 0; top: 25px; font-size: 39px; line-height: 44px; font-weight: 700; letter-spacing: -1px; }
.wm-du { left: 69px; top: 34px; font-size: 28px; line-height: 32px; font-weight: 700; }
.wm-cn { left: 115px; top: 28px; font-size: 32px; line-height: 36px; font-family: "Noto Sans CJK SC", sans-serif; white-space: nowrap; }
.wm-url { position: absolute; left: 2px; top: 62px; font-size: 21px; line-height: 26px; white-space: nowrap; color: rgba(255, 255, 255, .8); font-family: "Noto Sans", sans-serif; }
</style>
